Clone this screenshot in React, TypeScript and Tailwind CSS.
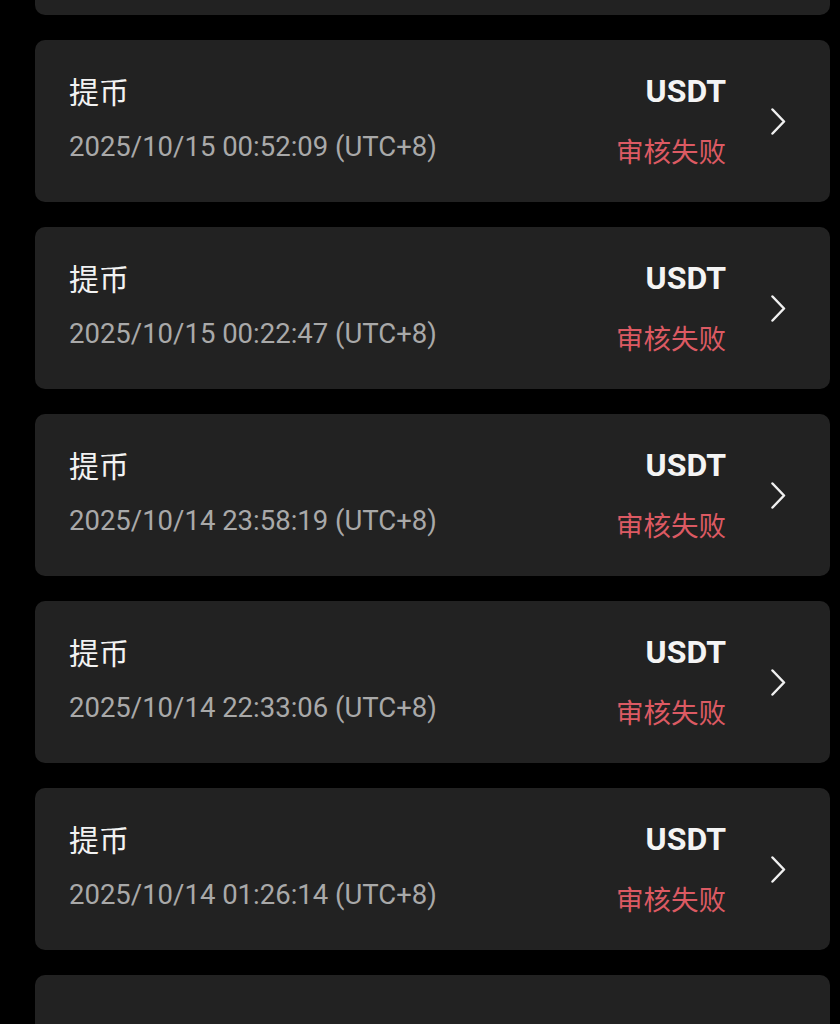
type Record = {
  title: string;
  time: string;
  coin: string;
  status: string;
};

const records: Record[] = [
  { title: '提币', time: '2025/10/15 00:52:09 (UTC+8)', coin: 'USDT', status: '审核失败' },
  { title: '提币', time: '2025/10/15 00:22:47 (UTC+8)', coin: 'USDT', status: '审核失败' },
  { title: '提币', time: '2025/10/14 23:58:19 (UTC+8)', coin: 'USDT', status: '审核失败' },
  { title: '提币', time: '2025/10/14 22:33:06 (UTC+8)', coin: 'USDT', status: '审核失败' },
  { title: '提币', time: '2025/10/14 01:26:14 (UTC+8)', coin: 'USDT', status: '审核失败' },
];

const font = { fontFamily: 'Roboto, "Noto Sans CJK SC", sans-serif' };

function Chevron() {
  return (
    <svg width="15" height="27" viewBox="0 0 15 27" fill="none" className="ml-[45px] shrink-0">
      <polyline points="1.5,1.5 13,13.5 1.5,25.5" stroke="#f0f0f0" strokeWidth="2.5" strokeLinecap="round" strokeLinejoin="round" />
    </svg>
  );
}

function RecordCard({ item }: { item: Record }) {
  return (
    <div className="flex h-[162px] items-center rounded-[10px] bg-[#222222] pl-[34px] pr-[44px]">
      <div className="mb-[4px] flex flex-1 flex-col">
        <div className="text-[30px] leading-[36px] text-[#f2f2f2]">{item.title}</div>
        <div className="mt-[19px] text-[27.5px] leading-[34px] text-[#a9a9a9]">{item.time}</div>
      </div>
      <div className="flex flex-col items-end">
        <div className="text-[32px] font-bold leading-[36px] text-[#f4f4f4]">{item.coin}</div>
        <div className="mt-[27px] text-[27.5px] leading-[34px] text-[#dc5a63]">{item.status}</div>
      </div>
      <Chevron />
    </div>
  );
}

export default function App() {
  return (
    <div className="h-[1024px] overflow-hidden bg-black pl-[35px] pr-[10px]" style={font}>
      <div className="h-[15px] rounded-b-[10px] bg-[#222222]" />
      <div className="mt-[25px] flex flex-col gap-[25px]">
        {records.map((r, i) => (
          <RecordCard key={i} item={r} />
        ))}
        <div className="h-[162px] rounded-[10px] bg-[#222222]" />
      </div>
    </div>
  );
}
